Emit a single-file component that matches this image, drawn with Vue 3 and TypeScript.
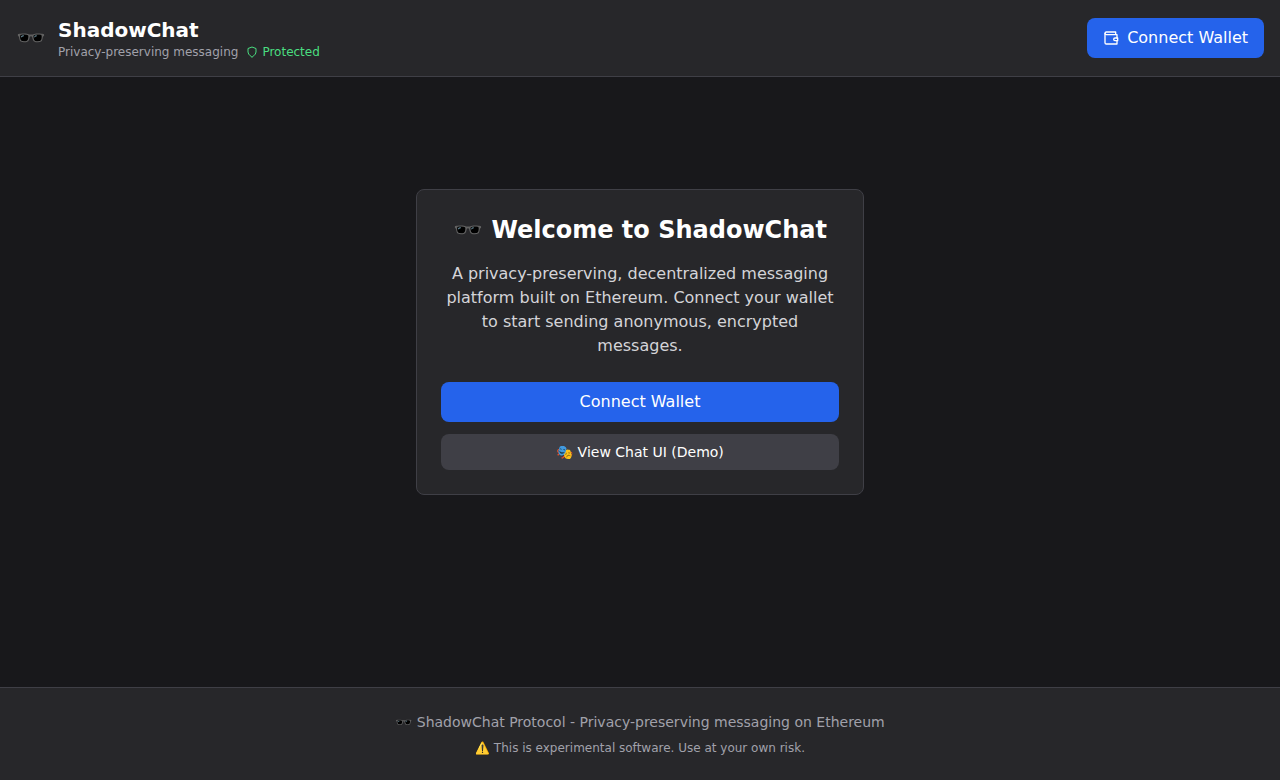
<script setup lang="ts">
import { ref } from 'vue'

const connecting = ref<boolean>(false)
const demoOpen = ref<boolean>(false)

function connectWallet(): void {
  connecting.value = true
}

function openDemo(): void {
  demoOpen.value = true
}
</script>

<template>
  <div class="app">
    <header class="header">
      <div class="brand">
        <span class="brand-logo">🕶️</span>
        <div>
          <h1 class="brand-name">ShadowChat</h1>
          <div class="brand-meta">
            <span>Privacy-preserving messaging</span>
            <span class="status">
              <svg class="status-icon" viewBox="0 0 24 24" aria-hidden="true">
                <path d="M12 22s8-4 8-10V5l-8-3-8 3v7c0 6 8 10 8 10" />
              </svg>
              <span>Protected</span>
            </span>
          </div>
        </div>
      </div>
      <button type="button" class="button primary" @click="connectWallet">
        <svg class="button-icon" viewBox="0 0 24 24" aria-hidden="true">
          <path d="M21 12V7H5a2 2 0 0 1 0-4h14v4" />
          <path d="M3 5v14a2 2 0 0 0 2 2h16v-5" />
          <path d="M18 12a2 2 0 0 0 0 4h4v-4Z" />
        </svg>
        <span>Connect Wallet</span>
      </button>
    </header>

    <main class="main">
      <section class="card">
        <h2 class="card-title">🕶️ Welcome to ShadowChat</h2>
        <p class="card-text">
          A privacy-preserving, decentralized messaging platform built on Ethereum. Connect your
          wallet to start sending anonymous, encrypted messages.
        </p>
        <div class="actions">
          <button type="button" class="button primary" @click="connectWallet">Connect Wallet</button>
          <button type="button" class="button secondary" @click="openDemo">🎭 View Chat UI (Demo)</button>
        </div>
      </section>
    </main>

    <footer class="footer">
      <p class="footer-title">🕶️ ShadowChat Protocol - Privacy-preserving messaging on Ethereum</p>
      <p class="footer-note">⚠️ This is experimental software. Use at your own risk.</p>
    </footer>
  </div>
</template>

<style>
body {
  margin: 0;
  background: #18181b;
}
</style>

<style scoped>
.app,
.app * {
  box-sizing: border-box;
}

.app {
  display: flex;
  flex-direction: column;
  min-height: 100vh;
  background: #18181b;
  color: #ffffff;
  font-family: "DejaVu Sans", sans-serif;
  font-size: 16px;
  line-height: 24px;
}

h1,
h2,
p {
  margin: 0;
}

.header {
  display: flex;
  align-items: center;
  justify-content: space-between;
  padding: 16px;
  background: #27272a;
  border-bottom: 1px solid #3f3f46;
}

.brand {
  display: flex;
  align-items: center;
  gap: 12px;
}

.brand-logo {
  font-size: 24px;
  line-height: 32px;
}

.brand-name {
  font-size: 20px;
  line-height: 28px;
  font-weight: 700;
}

.brand-meta {
  display: flex;
  align-items: center;
  gap: 8px;
  color: #a1a1aa;
  font-size: 12px;
  line-height: 16px;
}

.status {
  display: flex;
  align-items: center;
  gap: 4px;
  color: #4ade80;
}

svg {
  fill: none;
  stroke: currentColor;
  stroke-width: 2;
  stroke-linecap: round;
  stroke-linejoin: round;
}

.status-icon {
  width: 12px;
  height: 12px;
}

.button-icon {
  width: 16px;
  height: 16px;
}

.button {
  display: flex;
  align-items: center;
  justify-content: center;
  gap: 8px;
  padding: 8px 16px;
  border: 0;
  border-radius: 8px;
  color: #ffffff;
  font-family: inherit;
  font-size: 16px;
  line-height: 24px;
  cursor: pointer;
}

.primary {
  background: #2563eb;
}

.primary:hover {
  background: #1d4ed8;
}

.secondary {
  background: #3f3f46;
  font-size: 14px;
  line-height: 20px;
}

.secondary:hover {
  background: #52525b;
}

.main {
  flex: 1;
  padding: 112px 16px 32px;
}

.card {
  max-width: 448px;
  margin: 0 auto;
  padding: 24px;
  background: #27272a;
  border: 1px solid #3f3f46;
  border-radius: 8px;
  text-align: center;
}

.card-title {
  margin-bottom: 16px;
  font-size: 24px;
  line-height: 32px;
  font-weight: 700;
}

.card-text {
  margin-bottom: 24px;
  color: #d4d4d8;
}

.actions {
  display: flex;
  flex-direction: column;
  gap: 12px;
}

.footer {
  padding: 24px 16px;
  background: #27272a;
  border-top: 1px solid #3f3f46;
  color: #a1a1aa;
  text-align: center;
}

.footer-title {
  margin-bottom: 8px;
  font-size: 14px;
  line-height: 20px;
}

.footer-note {
  font-size: 12px;
  line-height: 16px;
}
</style>
